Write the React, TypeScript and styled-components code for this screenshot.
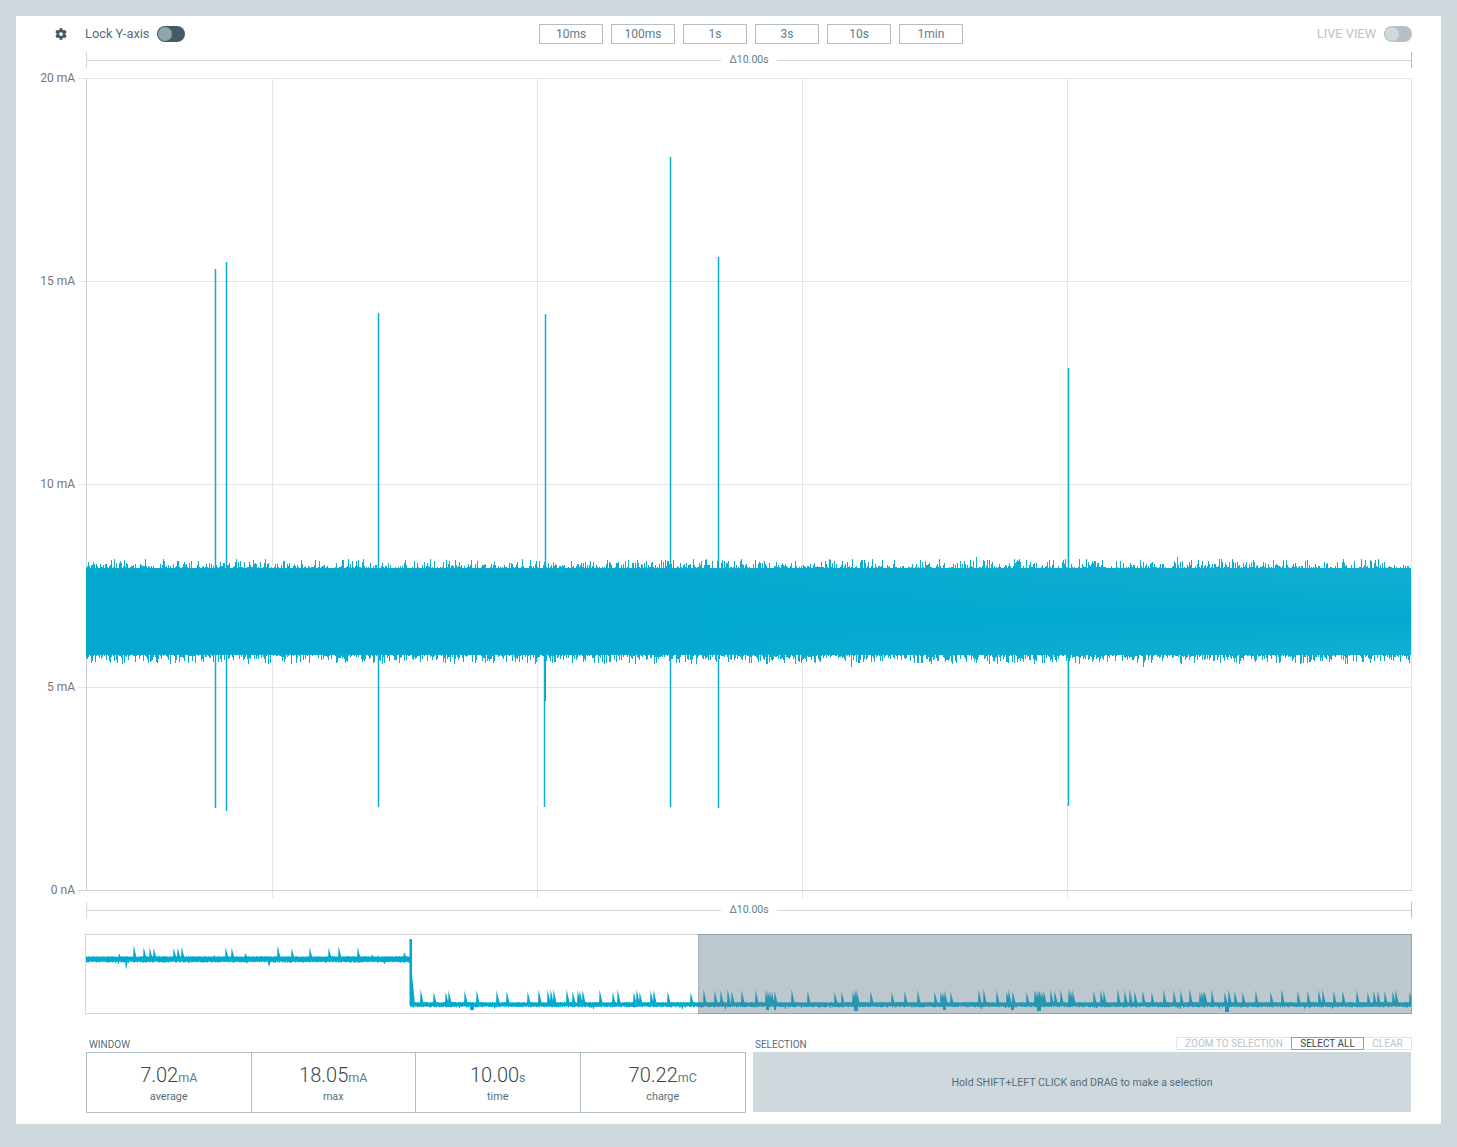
import { useMemo } from 'react';
import styled, { createGlobalStyle } from 'styled-components';
import { FaCog } from 'react-icons/fa';

const TRACE = '#00a9ce';

function makeRandom(seed: number) {
    let s = seed;
    return () => {
        s = (s * 16807) % 2147483647;
        return (s - 1) / 2147483646;
    };
}

// x, top of the spike, second x, end of the spike below the band
const SPIKES = [
    [215, 269, 215, 808],
    [226, 262, 226, 811],
    [378, 313, 378, 807],
    [545, 314, 544, 807],
    [670, 157, 670, 807],
    [718, 257, 718, 808],
    [1068, 368, 1068, 806],
];

const GRID_X = [272, 537, 802, 1067];
const GRID_Y = [78, 281, 484, 687];
const Y_LABELS = ['20 mA', '15 mA', '10 mA', '5 mA', '0 nA'];
const RANGES = ['10ms', '100ms', '1s', '3s', '10s', '1min'];

const UPPER_SPIKES = [133, 143, 149, 153, 173, 177, 181, 225, 231, 277, 291, 309, 328, 338, 357];
const LOWER_SPIKES = [
    420, 433, 445, 448, 464, 476, 496, 506, 527, 538, 547, 550, 553, 566, 572, 577, 579, 582, 599,
    612, 617, 633, 636, 639, 650, 653, 667, 690, 703, 714, 720, 727, 731, 741, 755, 765, 767, 769, 771, 774,
    791, 807, 834, 841, 852, 854, 856, 870, 891, 904, 917, 934, 940, 942, 944, 950, 978, 983, 996, 1006, 1008, 1012,
    1026, 1034, 1036, 1038, 1039, 1041, 1043, 1050, 1054, 1060, 1068, 1070, 1072, 1093, 1100, 1103, 1117, 1124, 1129, 1134,
    1142, 1151, 1163, 1173, 1180, 1189, 1199, 1201, 1203, 1204, 1211, 1224, 1228, 1234, 1242, 1255, 1270, 1281,
    1297, 1307, 1318, 1322, 1333, 1342, 1356, 1367, 1373, 1377, 1384, 1392, 1395, 1409,
];

function buildBand() {
    const rand = makeRandom(4711);
    let d = '';
    for (let x = 86; x < 1411; x++) {
        const up = Math.pow(rand(), 3.2) * 9;
        const down = Math.pow(rand(), 2.6) * 9;
        d += `M${x + 0.5} ${Math.round(568 - up)}V${Math.round(655 + down)}`;
    }
    // the few samples that stand out from the rest
    d += 'M976.5 557V570M1177.5 557V570M862.5 560V570M851.5 650V667M1143.5 650V667';
    return d;
}

function buildTrace(from: number, to: number, top: number, bottom: number, seed: number) {
    const rand = makeRandom(seed);
    let d = '';
    for (let x = from; x < to; x++) {
        const dip = rand() > 0.965 ? 1 + rand() * 2 : rand() * 1.2;
        d += `M${x + 0.5} ${(top - rand() * 0.6).toFixed(1)}V${(bottom + dip).toFixed(1)}`;
    }
    return d;
}

function buildSpikes(list: number[], top: number, base: number, seed: number) {
    const rand = makeRandom(seed);
    return list
        .map((x) => `M${x} ${base}L${x + 0.6} ${(top + rand() * 3).toFixed(1)}L${x + 4} ${base}Z`)
        .join('');
}

function Delta() {
    return (
        <DeltaBar>
            <DeltaLine />
            <DeltaLabel>Δ10.00s</DeltaLabel>
            <DeltaLine />
        </DeltaBar>
    );
}

function MainChart() {
    const band = useMemo(buildBand, []);

    return (
        <ChartSvg viewBox="78 78 1334 820">
            <defs>
                <linearGradient id="bandFade" x1="0" x2="1" y1="0" y2="0">
                    <stop offset="0" stopColor="#03a8cf" />
                    <stop offset="0.45" stopColor="#05a9cf" />
                    <stop offset="1" stopColor="#14aed3" />
                </linearGradient>
                <linearGradient id="bandCore" x1="0" x2="0" y1="0" y2="1">
                    <stop offset="0" stopColor={TRACE} stopOpacity="0" />
                    <stop offset="0.58" stopColor={TRACE} stopOpacity="0.9" />
                    <stop offset="1" stopColor={TRACE} stopOpacity="0" />
                </linearGradient>
            </defs>
            {GRID_Y.map((y) => (
                <line key={y} x1="78" x2="1412" y1={y + 0.5} y2={y + 0.5} stroke="#e3e5e7" />
            ))}
            {GRID_X.map((x) => (
                <line key={x} x1={x + 0.5} x2={x + 0.5} y1="78" y2="898" stroke="#e3e5e7" />
            ))}
            <line x1="1411.5" x2="1411.5" y1="78" y2="891" stroke="#e3e5e7" />
            <line x1="86.5" x2="86.5" y1="78" y2="891" stroke="#cdd0d2" />
            <line x1="78" x2="1412" y1="890.5" y2="890.5" stroke="#cdd2d5" />
            {SPIKES.map(([x, top, x2, end]) => (
                <SpikeGroup key={x}>
                    <line x1={x + 0.5} x2={x + 0.5} y1={top} y2="570" />
                    <line x1={x2 + 0.5} x2={x2 + 0.5} y1="650" y2={end} />
                </SpikeGroup>
            ))}
            <rect x="545" y="650" width="1" height="51" fill={TRACE} />
            <path d={band} stroke="#0badd2" strokeWidth="1" fill="none" />
            <rect x="86" y="569" width="1325" height="85" fill="url(#bandFade)" />
            <rect x="700" y="569" width="711" height="85" fill="url(#bandCore)" />
        </ChartSvg>
    );
}

function Overview() {
    const upper = useMemo(() => buildTrace(86, 410, 956.8, 961.5, 97), []);
    const lower = useMemo(() => buildTrace(410, 1411, 1002.6, 1006.2, 331), []);
    const upperSpikes = useMemo(() => buildSpikes(UPPER_SPIKES, 945, 960, 13), []);
    const lowerSpikes = useMemo(() => buildSpikes(LOWER_SPIKES, 989, 1005, 29), []);

    return (
        <OverviewBox>
            <OverviewSvg viewBox="86 935 1325 78">
                <path d={upper} stroke={TRACE} fill="none" />
                <path d={upperSpikes} fill={TRACE} />
                <path
                    d="M118 960L119 953L122 960ZM212 960L214 955L217 960ZM244 960L245 953L249 960ZM371 960L372 954L375 960ZM403 960L404 952L408 960ZM125 960L126 970L128 960ZM267 960L269 967L271 960Z"
                    fill={TRACE}
                />
                <rect x="409.5" y="939" width="2.5" height="66" fill={TRACE} />
                <path d="M412 975L415 1004L412 1004Z" fill={TRACE} />
                <path d={lower} stroke={TRACE} fill="none" />
                <path d={lowerSpikes} fill={TRACE} />
                <path
                    d="M470 1005H474V1010H470ZM766 1005H769V1010H766ZM774 1005H776V1010H774ZM854 1005H858V1011H854ZM943 1005H946V1010H943ZM1011 1005H1014V1010H1011ZM1037 1005H1041V1011H1037ZM1225 1005H1229V1012H1225Z"
                    fill={TRACE}
                />
            </OverviewSvg>
            <OverviewShade />
        </OverviewBox>
    );
}

function App() {
    return (
        <>
            <GlobalStyle />
            <Page>
                <Card>
                    <Toolbar>
                        <ToolbarLeft>
                            <FaCog size={12} color="#455a64" />
                            <ToggleLabel>Lock Y-axis</ToggleLabel>
                            <Switch />
                        </ToolbarLeft>
                        <RangeButtons>
                            {RANGES.map((range) => (
                                <RangeButton key={range}>{range}</RangeButton>
                            ))}
                        </RangeButtons>
                        <ToolbarRight>
                            <ToggleLabel $muted>LIVE VIEW</ToggleLabel>
                            <Switch $muted />
                        </ToolbarRight>
                    </Toolbar>
                    <Delta />
                    <ChartRow>
                        <YAxis>
                            {Y_LABELS.map((label) => (
                                <YLabel key={label}>{label}</YLabel>
                            ))}
                        </YAxis>
                        <MainChart />
                    </ChartRow>
                    <Delta />
                    <Overview />
                    <Footer>
                        <WindowPanel>
                            <PanelTitle>WINDOW</PanelTitle>
                            <StatGrid>
                                <StatCell>
                                    <StatValue>7.02<StatUnit>mA</StatUnit></StatValue>
                                    <StatCaption>average</StatCaption>
                                </StatCell>
                                <StatCell>
                                    <StatValue>18.05<StatUnit>mA</StatUnit></StatValue>
                                    <StatCaption>max</StatCaption>
                                </StatCell>
                                <StatCell>
                                    <StatValue>10.00<StatUnit>s</StatUnit></StatValue>
                                    <StatCaption>time</StatCaption>
                                </StatCell>
                                <StatCell>
                                    <StatValue>70.22<StatUnit>mC</StatUnit></StatValue>
                                    <StatCaption>charge</StatCaption>
                                </StatCell>
                            </StatGrid>
                        </WindowPanel>
                        <SelectionPanel>
                            <SelectionHeader>
                                <SelectionTitle>SELECTION</SelectionTitle>
                                <SelectionButtons>
                                    <SelectionButton $width={116}>ZOOM TO SELECTION</SelectionButton>
                                    <SelectionButton $width={73} $active>SELECT ALL</SelectionButton>
                                    <SelectionButton $width={49}>CLEAR</SelectionButton>
                                </SelectionButtons>
                            </SelectionHeader>
                            <SelectionHint>Hold SHIFT+LEFT CLICK and DRAG to make a selection</SelectionHint>
                        </SelectionPanel>
                    </Footer>
                </Card>
            </Page>
        </>
    );
}

const GlobalStyle = createGlobalStyle`
    body {
        margin: 0;
        background: #cfd8dc;
        font-family: Roboto, "Liberation Sans", sans-serif;
    }
`;

const Page = styled.div`
    box-sizing: border-box;
    width: 1457px;
    height: 1147px;
    padding: 16px;
    background: #cfd8dc;
`;

const Card = styled.div`
    box-sizing: border-box;
    width: 1425px;
    height: 1108px;
    padding: 0 29px 0 70px;
    background: #ffffff;
    display: flex;
    flex-direction: column;
`;

const Toolbar = styled.div`
    height: 36px;
    margin-left: -70px;
    display: flex;
    align-items: center;
`;

const ToolbarLeft = styled.div`
    width: 523px;
    padding-left: 39px;
    box-sizing: border-box;
    display: flex;
    align-items: center;
`;

const ToolbarRight = styled.div`
    flex: 1;
    display: flex;
    justify-content: flex-end;
    align-items: center;
`;

const ToggleLabel = styled.span<{ $muted?: boolean }>`
    font-size: 12.8px;
    line-height: 16px;
    margin: ${(p) => (p.$muted ? '0 8px 0 0' : '0 8px 0 18px')};
    color: ${(p) => (p.$muted ? '#b7c3c9' : '#546e7a')};
`;

const Switch = styled.div<{ $muted?: boolean }>`
    box-sizing: border-box;
    width: 28px;
    height: 16px;
    border-radius: 8px;
    padding: 1px;
    background: ${(p) => (p.$muted ? '#b6bfc3' : '#455a64')};

    &::before {
        content: '';
        display: block;
        width: 14px;
        height: 14px;
        border-radius: 50%;
        background: ${(p) => (p.$muted ? '#cfd8dc' : '#90a4ae')};
    }
`;

const RangeButtons = styled.div`
    display: flex;
    gap: 8px;
`;

const RangeButton = styled.div`
    box-sizing: border-box;
    width: 64px;
    height: 20px;
    border: 1px solid #b0bec5;
    color: #607d8b;
    font-size: 12px;
    line-height: 18px;
    text-align: center;
`;

const DeltaBar = styled.div`
    flex: none;
    height: 16px;
    box-sizing: border-box;
    border-left: 1px solid #cfd8dc;
    border-right: 1px solid #b0bec5;
    display: flex;
    align-items: center;
    gap: 8px;
`;

const DeltaLine = styled.div`
    flex: 1;
    height: 1px;
    background: #cfd8dc;
`;

const DeltaLabel = styled.span`
    font-size: 10.5px;
    line-height: 14px;
    color: #607d8b;
`;

const ChartRow = styled.div`
    flex: none;
    height: 820px;
    margin: 10px 0 4px -70px;
    display: flex;
`;

const YAxis = styled.div`
    flex: none;
    width: 59px;
    height: 826px;
    margin: -7px 3px 0 0;
    display: flex;
    flex-direction: column;
    justify-content: space-between;
`;

const YLabel = styled.div`
    font-size: 12px;
    line-height: 14px;
    text-align: right;
    color: #757575;
`;

const ChartSvg = styled.svg`
    flex: none;
    display: block;
    width: 1334px;
    height: 820px;
    shape-rendering: crispEdges;
`;

const SpikeGroup = styled.g`
    stroke: #08aed4;
    stroke-width: 1.5px;
    shape-rendering: geometricPrecision;
`;

const OverviewBox = styled.div`
    position: relative;
    flex: none;
    box-sizing: border-box;
    height: 80px;
    margin: 16px 0 0 -1px;
    border: 1px solid #cfd8dc;
`;

const OverviewSvg = styled.svg`
    display: block;
    width: 1325px;
    height: 78px;
`;

const OverviewShade = styled.div`
    position: absolute;
    top: -1px;
    bottom: -1px;
    right: -1px;
    width: 714px;
    box-sizing: border-box;
    background: rgba(96, 125, 139, 0.42);
    border: 1px solid rgba(96, 125, 139, 0.25);
`;

const Footer = styled.div`
    flex: none;
    margin-top: 23px;
    display: flex;
    gap: 7px;
`;

const WindowPanel = styled.div`
    width: 660px;
    display: flex;
    flex-direction: column;
`;

const SelectionPanel = styled.div`
    width: 658px;
    display: flex;
    flex-direction: column;
`;

const PanelTitle = styled.div`
    height: 15px;
    padding: 1px 0 0 3px;
    box-sizing: border-box;
    font-size: 10px;
    line-height: 14px;
    color: #546e7a;
`;

const SelectionTitle = styled(PanelTitle)`
    padding-left: 2px;
`;

const StatGrid = styled.div`
    box-sizing: border-box;
    height: 61px;
    border: 1px solid #b0bec5;
    display: grid;
    grid-template-columns: repeat(4, 1fr);
`;

const StatCell = styled.div`
    padding-top: 10px;
    text-align: center;
    border-right: 1px solid #b0bec5;

    &:last-child {
        border-right: none;
    }
`;

const StatValue = styled.div`
    font-size: 20px;
    line-height: 24px;
    font-weight: 300;
    color: #37474f;
`;

const StatUnit = styled.span`
    font-size: 12.5px;
    font-weight: 400;
    color: #607d8b;
`;

const StatCaption = styled.div`
    margin-top: 1px;
    font-size: 10.8px;
    line-height: 12px;
    color: #546e7a;
`;

const SelectionHeader = styled.div`
    height: 15px;
    display: flex;
    justify-content: space-between;
    align-items: flex-start;
`;

const SelectionButtons = styled.div`
    display: flex;
    height: 13px;
    margin-right: -1px;
`;

const SelectionButton = styled.div<{ $width: number; $active?: boolean }>`
    box-sizing: border-box;
    width: ${(p) => p.$width}px;
    margin-left: -1px;
    border: 1px solid ${(p) => (p.$active ? '#90a4ae' : '#dfe5e8')};
    position: ${(p) => (p.$active ? 'relative' : 'static')};
    font-size: 10px;
    line-height: 11px;
    text-align: center;
    color: ${(p) => (p.$active ? '#37474f' : '#b7c3c9')};
`;

const SelectionHint = styled.div`
    height: 60px;
    background: #cfd8dc;
    color: #546e7a;
    font-size: 10.65px;
    display: flex;
    align-items: center;
    justify-content: center;
`;

export default App;
